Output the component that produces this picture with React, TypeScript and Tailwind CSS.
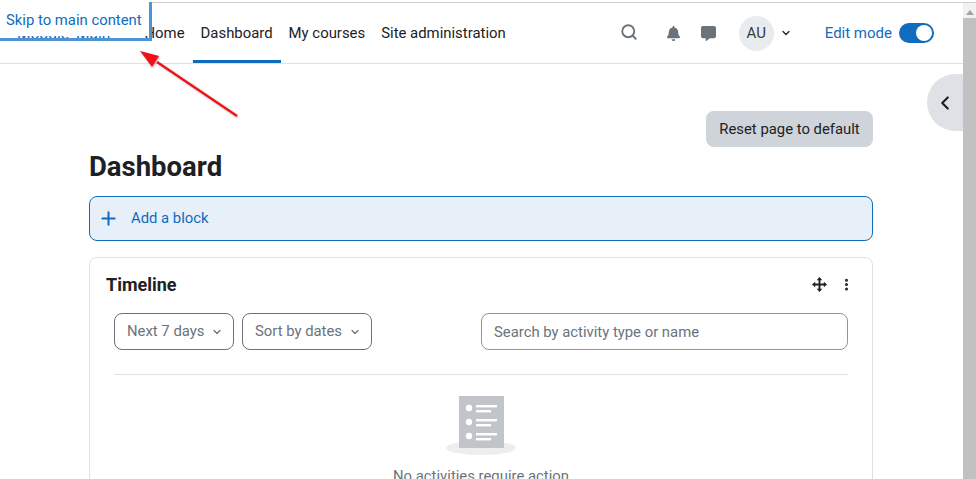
import { ChevronDown, ChevronLeft, MoreVertical, Plus, Search } from "lucide-react";
import { FaBell, FaCommentAlt } from "react-icons/fa";

const navLinks = ["Home", "Dashboard", "My courses", "Site administration"];

function MoveIcon() {
  return (
    <svg viewBox="0 0 16 16" className="h-[15px] w-[15px] text-[#1d2125]" fill="currentColor">
      <path d="M8 0 11 3.4H9V7h3.600V5l3.400 3-3.400 3V9H9v3.600h2L8 16l-3-3.400h2V9H3.400v2L0 8l3.400-3v2H7V3.400H5z" />
    </svg>
  );
}

function EmptyIcon() {
  return (
    <svg viewBox="0 0 70 60" className="h-[60px] w-[70px]">
      <ellipse cx="35" cy="52" rx="35" ry="7" fill="#eeeeee" />
      <rect x="13" y="0" width="45" height="52" fill="#c1c5c9" />
      <circle cx="23" cy="12" r="3.2" fill="#fff" />
      <circle cx="23" cy="26" r="3.2" fill="#fff" />
      <circle cx="23" cy="40" r="3.2" fill="#fff" />
      <rect x="30" y="9" width="21" height="2.4" fill="#fff" />
      <rect x="30" y="14" width="15" height="2.4" fill="#fff" />
      <rect x="30" y="23" width="21" height="2.4" fill="#fff" />
      <rect x="30" y="28" width="15" height="2.4" fill="#fff" />
      <rect x="30" y="37" width="21" height="2.4" fill="#fff" />
      <rect x="30" y="42" width="15" height="2.4" fill="#fff" />
    </svg>
  );
}

export default function App() {
  return (
    <div className="relative h-[479px] w-[976px] overflow-hidden bg-white pt-[2px] font-['Roboto',sans-serif] text-[15px] text-[#1d2125]">
      <div className="flex h-[477px] border-t border-[#d0d0d0]">
        <div className="min-w-0 flex-1">
          <div className="flex h-[61px] items-stretch border-b border-b-[#dee2e6] pr-[29px]">
            <div className="flex w-[136.500px] items-center pt-[3px] pl-[17px] text-[15.500px] text-[#0f6cbf]">Moodle_Main</div>
            <nav className="flex items-stretch text-[14.9px]">
              {navLinks.map((link) => (
                <a
                  key={link}
                  className={
                    link === "Dashboard"
                      ? "flex items-center border-b-[3px] border-[#0f6cbf] px-2 pt-[3px]"
                      : "flex items-center border-b-[3px] border-transparent px-2 pt-[3px]"
                  }
                >
                  {link}
                </a>
              ))}
            </nav>
            <div className="ml-auto flex items-center">
              <Search className="mb-[2px] h-[18px] w-[18px] text-[#6a737b]" strokeWidth={2.5} />
              <FaBell className="ml-[28px] h-[15px] w-[15px] text-[#6a737b]" />
              <FaCommentAlt className="ml-[20px] h-[15px] w-[15px] text-[#6a737b]" />
              <div className="ml-[23px] flex h-[35px] w-[35px] items-center justify-center rounded-full bg-[#e9ecef] text-[15px] text-[#343a40]">
                AU
              </div>
              <ChevronDown className="ml-[6px] h-[12px] w-[12px]" strokeWidth={2.5} />
              <span className="ml-[33px] text-[#0f6cbf]">Edit mode</span>
              <div className="ml-[7px] flex h-5 w-[35px] items-center justify-end rounded-full bg-[#0f6cbf] pr-[2px]">
                <div className="h-4 w-4 rounded-full bg-white" />
              </div>
            </div>
          </div>

          <main className="px-[89px] pr-[90px]">
            <div className="mt-[47px] flex justify-end">
              <button className="h-9 w-[167px] rounded-lg bg-[#ced4da] text-[14.85px] text-[#1d2125]">
                Reset page to default
              </button>
            </div>
            <h1 className="mt-[1px] text-[27.5px] leading-[38px] font-bold">Dashboard</h1>
            <div className="mt-[10px] flex h-[45px] items-center rounded-lg border border-[#0f6cbf] bg-[#e7eff8] pl-[8px] text-[14.85px] text-[#0f6cbf]">
              <Plus className="h-[21px] w-[21px]" strokeWidth={2.3} />
              <span className="ml-[12px]">Add a block</span>
            </div>
            <section className="mt-4 h-[300px] rounded-lg border border-[#dee2e6] px-4 pt-[17px] text-[14.85px]">
              <div className="flex items-center justify-between pr-[2px]">
                <h2 className="text-lg leading-5 font-bold">Timeline</h2>
                <div className="mb-[2px] flex items-center gap-[12px]">
                  <MoveIcon />
                  <MoreVertical className="h-[15px] w-[15px]" strokeWidth={2.8} />
                </div>
              </div>
              <div className="mx-2 mt-[18px]">
                <div className="flex items-center text-[#6a737b]">
                  <button className="flex h-[37px] w-[120px] items-center rounded-lg border border-[#6a737b] pl-3">
                    Next 7 days
                    <ChevronDown className="ml-[7px] h-3 w-3" strokeWidth={2.5} />
                  </button>
                  <button className="ml-2 flex h-[37px] w-[130px] items-center rounded-lg border border-[#6a737b] pl-3">
                    Sort by dates
                    <ChevronDown className="ml-[7px] h-3 w-3" strokeWidth={2.5} />
                  </button>
                  <div className="ml-auto flex h-[37px] w-[367px] items-center rounded-lg border border-[#8f959e] pt-[2px] pl-3">
                    Search by activity type or name
                  </div>
                </div>
                <div className="mt-6 border-t border-[#dee2e6]" />
                <div className="mt-[21px] flex flex-col items-center text-[#6a737b]">
                  <EmptyIcon />
                  <p className="mt-[9px]">No activities require action</p>
                </div>
              </div>
            </section>
          </main>
        </div>

        <div className="flex w-[13px] shrink-0 flex-col bg-[#f1f1f1]">
          <div className="flex h-[15px] items-center justify-center pt-1">
            <div className="h-0 w-0 border-x-[4px] border-b-[5px] border-x-transparent border-b-[#a3a3a3]" />
          </div>
          <div className="flex-1 bg-[#c1c1c1]" />
        </div>
      </div>

      {/* white part stops short of the border so the logo text peeks through */}
      <a className="absolute top-[2px] left-0 h-[39px] w-[152px] border-r-[3px] border-b-[3px] border-[#4f93d3] text-[14.85px] text-[#0f6cbf]">
        <span className="flex h-[34px] items-center bg-white pt-[2px] pl-[6px]">Skip to main content</span>
      </a>

      <svg
        className="absolute top-[46px] left-[136px] h-[76px] w-[106px] drop-shadow-[1px_1px_1px_rgba(0,0,0,0.3)]"
        viewBox="0 0 106 76"
      >
        <path d="M101 70 21 16" stroke="#f01018" strokeWidth="2.2" fill="none" />
        <path d="M4 5 23 10 16 21z" fill="#f01018" />
      </svg>

      <button className="absolute top-[74px] left-[927px] flex h-[57px] w-[36px] items-center rounded-l-full bg-[#dee2e6] pl-[7px]">
        <ChevronLeft className="h-[22px] w-[22px]" strokeWidth={2.4} />
      </button>
    </div>
  );
}
